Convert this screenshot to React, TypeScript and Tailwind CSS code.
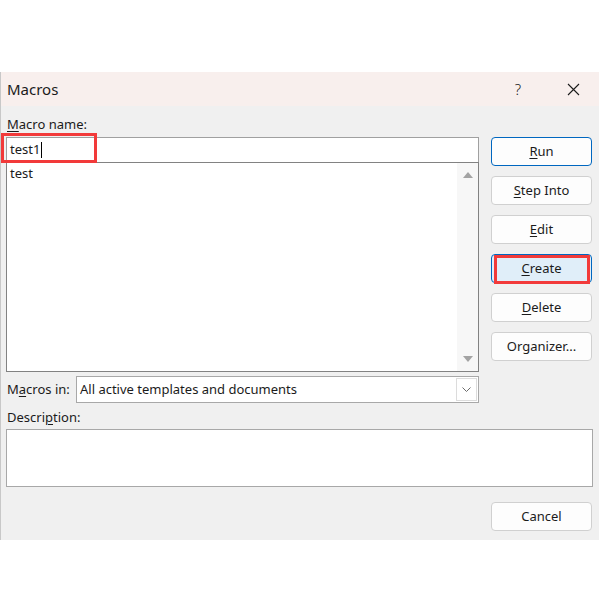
import React from "react";

const font = { fontFamily: "'Segoe UI', 'Noto Sans', 'Open Sans', sans-serif" };

function Btn({ children, primary, selected, marked }: { children: React.ReactNode; primary?: boolean; selected?: boolean; marked?: boolean }) {
  return (
    <button
      className={`relative h-[29px] w-[101px] rounded-[4px] border text-[13px] text-[#1b1b1b] ${
        selected ? "border-[#0067c0] bg-[#e0eef9]" : primary ? "border-[#0067c0] bg-[#fdfdfd]" : "border-[#d0d0d0] bg-[#fdfdfd]"
      }`}
    >
      {children}
      {marked && <span className="pointer-events-none absolute left-[2px] right-[1px] top-0 bottom-[-2px] border-[3px] border-[#f23a3a]" />}
    </button>
  );
}

function U({ c }: { c: string }) {
  return <span className="underline underline-offset-2 decoration-1">{c}</span>;
}

export default function App() {
  return (
    <div className="h-[600px] w-[600px] bg-white pt-[72px] text-[#1b1b1b]" style={font}>
      <div className="flex h-[468px] w-[599px] flex-col border-l border-[#c8c8c8] bg-[#f0f0f0]">
        {/* title bar */}
        <div className="flex h-[34px] items-center bg-[#f8efed]">
          <span className="pl-[6px] text-[15px]">Macros</span>
          <span className="ml-auto mr-[46px] text-[15px] font-light">?</span>
          <svg className="mr-[19px]" width="13" height="13" viewBox="0 0 13 13" fill="none" stroke="#1b1b1b" strokeWidth="1.1">
            <path d="M1 1 L12 12 M12 1 L1 12" />
          </svg>
        </div>

        <div className="flex flex-col pl-[5px] pr-[5px] pt-[9px]">
          <div className="flex gap-[12px]">
            {/* left column */}
            <div className="flex w-[473px] flex-col">
              <div className="h-[19px] pl-[1px] text-[13px] leading-[19px]">
                <U c="M" />acro name:
              </div>
              <div className="relative mt-[3px] flex h-[25px] items-center border border-b-0 border-[#a0a0a0] bg-white pl-[3px] text-[13px]">
                <span>test1</span>
                <span className="ml-[1px] h-[16px] w-[1px] bg-black" />
                <span className="pointer-events-none absolute left-[-6px] top-[-5px] h-[30px] w-[96px] border-[3px] border-[#f23a3a]" />
              </div>
              <div className="flex h-[210px] border border-[#828282] bg-white">
                <div className="flex-1 pl-[3px] pt-[1px] text-[13px]">test</div>
                <div className="flex w-[21px] flex-col items-center justify-between bg-[#f7f7f7] py-[9px]">
                  <svg width="10" height="6" viewBox="0 0 10 6">
                    <path d="M0 6 L5 0 L10 6 Z" fill="#a3a3a3" />
                  </svg>
                  <svg width="10" height="6" viewBox="0 0 10 6">
                    <path d="M0 0 L5 6 L10 0 Z" fill="#a3a3a3" />
                  </svg>
                </div>
              </div>
              <div className="mt-[4px] flex items-center">
                <span className="w-[70px] pl-[1px] text-[13px]">
                  M<U c="a" />cros in:
                </span>
                <div className="flex h-[27px] flex-1 items-center border border-[#a8a8a8] bg-white pl-[3px] pr-[1px] text-[13px]">
                  <span className="flex-1">All active templates and documents</span>
                  <div className="flex h-[23px] w-[21px] items-center justify-center border border-[#dcdcdc] bg-white">
                    <svg width="9" height="5" viewBox="0 0 9 5" fill="none" stroke="#6b6b6b" strokeWidth="1">
                      <path d="M0.5 0.5 L4.5 4.5 L8.5 0.5" />
                    </svg>
                  </div>
                </div>
              </div>
            </div>

            {/* right column */}
            <div className="mt-[22px] flex flex-col gap-[10px]">
              <Btn primary>
                <U c="R" />un
              </Btn>
              <Btn>
                <U c="S" />tep Into
              </Btn>
              <Btn>
                <U c="E" />dit
              </Btn>
              <Btn selected marked>
                <U c="C" />reate
              </Btn>
              <Btn>
                <U c="D" />elete
              </Btn>
              <Btn>Organizer...</Btn>
            </div>
          </div>

          <div className="mt-[5px] h-[19px] pl-[1px] text-[13px] leading-[19px]">
            Descri<U c="p" />tion:
          </div>
          <div className="mt-[2px] h-[58px] w-[587px] border border-[#a8a8a8] bg-white" />

          <div className="mt-[15px] flex justify-end pr-[2px]">
            <Btn>Cancel</Btn>
          </div>
        </div>
      </div>
    </div>
  );
}
